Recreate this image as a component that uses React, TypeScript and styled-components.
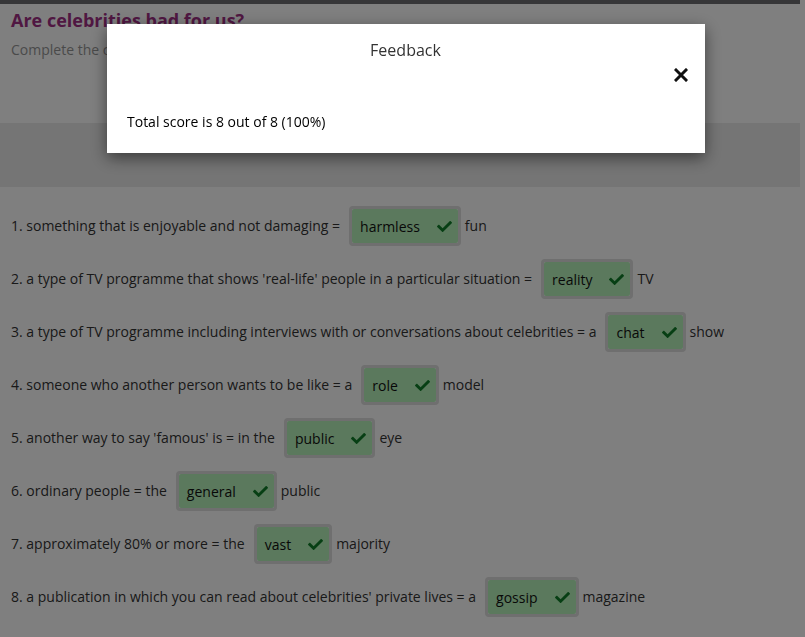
import styled, { createGlobalStyle } from "styled-components";
import { FaCheck } from "react-icons/fa";

const GlobalStyle = createGlobalStyle`
  html, body {
    margin: 0;
    padding: 0;
    background: #ffffff;
    font-family: "Open Sans", "Noto Sans", sans-serif;
  }
`;

const S = {
  Page: styled.div`
    width: 800px;
    min-height: 637px;
    background: #ffffff;
  `,
  TopBar: styled.div`
    height: 4px;
    background: #6c6c70;
  `,
  Header: styled.div`
    padding: 4px 11px 0;
  `,
  Title: styled.h1`
    margin: 0;
    font-size: 18px;
    line-height: 24px;
    font-weight: 700;
    color: #a02f84;
  `,
  Subtitle: styled.p`
    margin: 8px 0 0;
    font-size: 14px;
    line-height: 20px;
    color: #959595;
  `,
  WordBank: styled.div`
    margin-top: 63px;
    height: 64px;
    background: #ebebeb;
  `,
  List: styled.div`
    padding: 12px 11px 0;
    display: flex;
    flex-direction: column;
  `,
  Row: styled.div`
    display: flex;
    align-items: center;
    height: 53px;
    font-size: 14px;
    color: #333333;
    white-space: pre;
  `,
  Answer: styled.div`
    margin: 0 4px 0 9px;
    border: 3px solid #dedede;
    border-radius: 4px;
    height: 34px;
    display: flex;
    align-items: center;
  `,
  AnswerInner: styled.div`
    height: 100%;
    display: flex;
    align-items: center;
    gap: 17px;
    padding: 2px 6px 0 8px;
    box-sizing: border-box;
    background: #b6f2ba;
    border-radius: 2px;
    color: #111111;
    font-size: 14px;
  `,
  Tick: styled.span`
    display: flex;
    color: #0f7f28;
  `,
  Overlay: styled.div`
    position: fixed;
    inset: 0;
    background: rgba(0, 0, 0, 0.5);
  `,
  Modal: styled.div`
    position: fixed;
    top: 24px;
    left: 107px;
    width: 598px;
    box-sizing: border-box;
    padding: 15px 17px 21px 20px;
    background: #ffffff;
    box-shadow: 0 5px 15px rgba(0, 0, 0, 0.5);
  `,
  ModalTitle: styled.div`
    text-align: center;
    font-size: 16px;
    line-height: 22px;
    color: #333333;
    padding-right: 4px;
  `,
  CloseRow: styled.div`
    margin-top: 7px;
    height: 16px;
    display: flex;
    justify-content: flex-end;
  `,
  Close: styled.button`
    border: none;
    background: none;
    padding: 0;
    width: 14px;
    height: 14px;
    display: flex;
    cursor: pointer;
  `,
  ModalBody: styled.div`
    margin-top: 28px;
    font-size: 14px;
    line-height: 20px;
    color: #000000;
  `,
};

const items = [
  { q: "1. something that is enjoyable and not damaging =", a: "harmless", after: "fun" },
  {
    q: "2. a type of TV programme that shows 'real-life' people in a particular situation =",
    a: "reality",
    after: "TV",
  },
  {
    q: "3. a type of TV programme including interviews with or conversations about celebrities = a",
    a: "chat",
    after: "show",
  },
  { q: "4. someone who another person wants to be like = a", a: "role", after: "model" },
  { q: "5. another way to say 'famous' is = in the", a: "public", after: "eye" },
  { q: "6. ordinary people = the", a: "general", after: "public" },
  { q: "7. approximately 80% or more = the", a: "vast", after: "majority" },
  {
    q: "8. a publication in which you can read about celebrities' private lives = a",
    a: "gossip",
    after: "magazine",
  },
];

const CloseIcon = () => (
  <svg width="14" height="14" viewBox="0 0 14 14">
    <path d="M2 2 L12 12 M12 2 L2 12" stroke="#111" strokeWidth="3" strokeLinecap="square" />
  </svg>
);

export default function App() {
  return (
    <>
      <GlobalStyle />
      <S.Page>
        <S.TopBar />
        <S.Header>
          <S.Title>Are celebrities bad for us?</S.Title>
          <S.Subtitle>Complete the collocations with the words below.</S.Subtitle>
        </S.Header>
        <S.WordBank />
        <S.List>
          {items.map((it) => (
            <S.Row key={it.a}>
              <span>{it.q}</span>
              <S.Answer>
                <S.AnswerInner>
                  <span>{it.a}</span>
                  <S.Tick>
                    <FaCheck size={15} />
                  </S.Tick>
                </S.AnswerInner>
              </S.Answer>
              <span>{it.after}</span>
            </S.Row>
          ))}
        </S.List>
      </S.Page>
      <S.Overlay />
      <S.Modal>
        <S.ModalTitle>Feedback</S.ModalTitle>
        <S.CloseRow>
          <S.Close aria-label="Close">
            <CloseIcon />
          </S.Close>
        </S.CloseRow>
        <S.ModalBody>Total score is 8 out of 8 (100%)</S.ModalBody>
      </S.Modal>
    </>
  );
}
